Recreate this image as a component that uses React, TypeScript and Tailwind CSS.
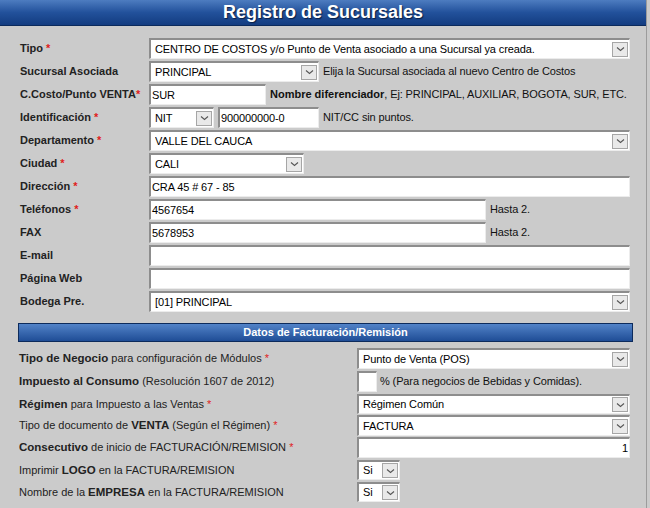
import React from "react";

const font = { fontFamily: '"Liberation Sans", Arial, sans-serif' };

function Chevron() {
  return (
    <span className="flex h-[15px] w-[16px] shrink-0 items-center justify-center border border-[#a6a6a6] bg-[#e9e9e9]">
      <svg width="9" height="6" viewBox="0 0 9 6">
        <path d="M1 1.5 L4.5 4.5 L8 1.5" fill="none" stroke="#555" strokeWidth="1.1" />
      </svg>
    </span>
  );
}

function Select({ w, value, h = "h-[21px]" }: { w: string; value: string; h?: string }) {
  return (
    <div
      className={`${w} ${h} flex shrink-0 items-center border-l-2 border-t-2 border-b border-r border-l-[#8d8d8d] border-t-[#8d8d8d] border-b-[#ececec] border-r-[#ececec] bg-white pl-[4px] pr-[1px]`}
    >
      <span className="flex-1 truncate text-[11px] leading-none tracking-[-0.12px] text-black">{value}</span>
      <Chevron />
    </div>
  );
}

function Input({ w, value = "", right = false }: { w: string; value?: string; right?: boolean }) {
  return (
    <div
      className={`${w} flex h-[21px] shrink-0 items-center border-l-2 border-t-2 border-b border-r border-l-[#8d8d8d] border-t-[#8d8d8d] border-b-[#ececec] border-r-[#ececec] bg-white px-[1px] ${right ? "justify-end" : ""}`}
    >
      <span className="text-[11px] leading-none tracking-[-0.12px] text-black">{value}</span>
    </div>
  );
}

const Req = () => <span className="text-[#e01b1b]">*</span>;

// bold fragment used inside the billing-section labels
const B = ({ children }: { children: React.ReactNode }) => (
  <b className="text-[11.5px]">{children}</b>
);

function Row({ label, children }: { label: React.ReactNode; children: React.ReactNode }) {
  return (
    <div className="flex h-[23px] items-start">
      <div className="flex h-[21px] w-[129px] shrink-0 items-center text-[11px] font-bold text-[#222]">
        <span className="whitespace-nowrap">{label}</span>
      </div>
      <div className="flex items-center gap-[4px]">{children}</div>
    </div>
  );
}

function Row2({ label, children, h }: { label: React.ReactNode; children: React.ReactNode; h: string }) {
  return (
    <div className={`flex ${h} items-start`}>
      <div className="flex h-[21px] w-[338px] shrink-0 items-center text-[11px] text-[#222]">
        <span className="whitespace-nowrap">{label}</span>
      </div>
      <div className="flex items-center gap-[3px]">{children}</div>
    </div>
  );
}

const Hint = ({ children }: { children: React.ReactNode }) => (
  <span className="whitespace-nowrap text-[11px] tracking-[-0.12px] text-[#111]">{children}</span>
);

export default function App() {
  return (
    <div className="h-[508px] w-[650px] overflow-hidden bg-[#cbcbcb]" style={font}>
      <div className="h-[508px] w-[647px] border-r border-[#9c9c9c]">
        <div className="flex h-[26px] items-center justify-center border-b border-[#0b2a5c] bg-gradient-to-b from-[#4d7cc0] via-[#22519b] to-[#133c80]">
          <h1
            className="text-[18px] font-bold text-white"
            style={{ textShadow: "1px 1px 1px #0a1f45" }}
          >
            Registro de Sucursales
          </h1>
        </div>

        <div className="pl-[20px] pt-[12px]">
          <Row label={<>Tipo <Req /></>}>
            <Select w="w-[481px]" value="CENTRO DE COSTOS y/o Punto de Venta asociado a una Sucursal ya creada." />
          </Row>
          <Row label="Sucursal Asociada">
            <Select w="w-[170px]" value="PRINCIPAL" />
            <Hint>Elija la Sucursal asociada al nuevo Centro de Costos</Hint>
          </Row>
          <Row label={<>C.Costo/Punto VENTA<Req /></>}>
            <Input w="w-[117px]" value="SUR" />
            <Hint>
              <b className="tracking-normal">Nombre diferenciador</b>, Ej: PRINCIPAL, AUXILIAR, BOGOTA, SUR, ETC.
            </Hint>
          </Row>
          <Row label={<>Identificación <Req /></>}>
            <Select w="w-[65px]" value="NIT" />
            <Input w="w-[101px]" value="900000000-0" />
            <Hint>NIT/CC sin puntos.</Hint>
          </Row>
          <Row label={<>Departamento <Req /></>}>
            <Select w="w-[481px]" value="VALLE DEL CAUCA" />
          </Row>
          <Row label={<>Ciudad <Req /></>}>
            <Select w="w-[155px]" value="CALI" />
          </Row>
          <Row label={<>Dirección <Req /></>}>
            <Input w="w-[481px]" value="CRA 45 # 67 - 85" />
          </Row>
          <Row label={<>Teléfonos <Req /></>}>
            <Input w="w-[337px]" value="4567654" />
            <Hint>Hasta 2.</Hint>
          </Row>
          <Row label="FAX">
            <Input w="w-[337px]" value="5678953" />
            <Hint>Hasta 2.</Hint>
          </Row>
          <Row label="E-mail">
            <Input w="w-[481px]" />
          </Row>
          <Row label="Página Web">
            <Input w="w-[481px]" />
          </Row>
          <Row label="Bodega Pre.">
            <Select w="w-[481px]" value="[01] PRINCIPAL" />
          </Row>
        </div>

        <div className="ml-[18px] mt-[9px] flex h-[19px] w-[615px] items-center justify-center border border-[#0d2b5c] bg-gradient-to-b from-[#5283c8] to-[#1f4d96]">
          <span className="text-[11px] font-bold text-white">Datos de Facturación/Remisión</span>
        </div>

        <div className="pl-[19px] pt-[6px]">
          <Row2 h="h-[23px]" label={<><B>Tipo de Negocio</B> para configuración de Módulos <Req /></>}>
            <Select w="w-[273px]" value="Punto de Venta (POS)" />
          </Row2>
          <Row2 h="h-[23px]" label={<><B>Impuesto al Consumo</B> (Resolución 1607 de 2012)</>}>
            <Input w="w-[20px]" />
            <Hint>% (Para negocios de Bebidas y Comidas).</Hint>
          </Row2>
          <Row2 h="h-[21px]" label={<><B>Régimen</B> para Impuesto a las Ventas <Req /></>}>
            <Select w="w-[273px]" h="h-[20px]" value="Régimen Común" />
          </Row2>
          <Row2 h="h-[22px]" label={<>Tipo de documento de <B>VENTA</B> (Según el Régimen) <Req /></>}>
            <Select w="w-[273px]" value="FACTURA" />
          </Row2>
          <Row2 h="h-[23px]" label={<><B>Consecutivo</B> de inicio de FACTURACIÓN/REMISION <Req /></>}>
            <Input w="w-[273px]" value="1" right />
          </Row2>
          <Row2 h="h-[22px]" label={<>Imprimir <B>LOGO</B> en la FACTURA/REMISION</>}>
            <Select w="w-[43px]" h="h-[20px]" value="Si" />
          </Row2>
          <Row2 h="h-[22px]" label={<>Nombre de la <B>EMPRESA</B> en la FACTURA/REMISION</>}>
            <Select w="w-[43px]" h="h-[20px]" value="Si" />
          </Row2>
        </div>
      </div>
    </div>
  );
}
